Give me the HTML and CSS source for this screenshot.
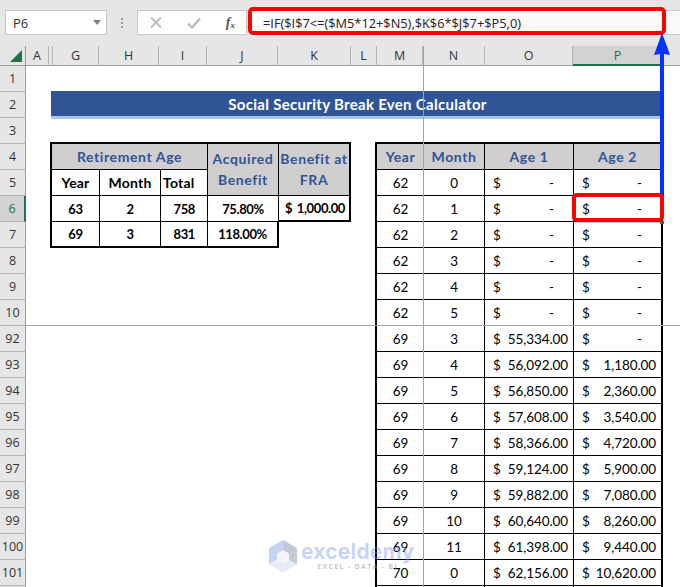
FILE: index.html
```html
<!DOCTYPE html>
<html lang="en">
<head>
<meta charset="utf-8">
<title>Social Security Break Even Calculator</title>
<link rel="stylesheet" href="styles.css">
</head>
<body>
<div class="app">
  <div class="toolbar">
    <div class="namebox"><span>P6</span><svg class="caret" width="8" height="5" viewBox="0 0 8 5"><path d="M0 0h8L4 5z" fill="#7f7f7f"/></svg></div>
    <div class="dots"><i></i><i></i><i></i></div>
    <div class="fxbtns">
      <svg width="12" height="11" viewBox="0 0 12 11"><path d="M1 .5l10 10M11 .5l-10 10" stroke="#bdbdbd" stroke-width="2" fill="none"/></svg>
      <svg width="14" height="12" viewBox="0 0 14 12"><path d="M1 6.500l4 4L13 1.500" stroke="#bdbdbd" stroke-width="2.400" fill="none"/></svg>
      <span class="fx">f<sub>x</sub></span>
    </div>
    <div class="formula">=IF($I$7&lt;=($M5*12+$N5),$K$6*$J$7+$P5,0)</div>
  </div>
  <div class="colhead">
    <div class="corner"><svg width="12" height="12" viewBox="0 0 12 12"><path d="M12 0v12H0z" fill="#217346"/></svg></div>
    <div class="ch">A</div><div class="ch"></div><div class="ch">G</div><div class="ch">H</div><div class="ch">I</div><div class="ch">J</div><div class="ch">K</div><div class="ch">L</div><div class="ch">M</div><div class="ch">N</div><div class="ch">O</div><div class="ch active">P</div><div class="ch last"></div>
  </div>
  <div class="sheet">
    <div class="rowhead">
      <div class="rh">1</div><div class="rh">2</div><div class="rh">3</div><div class="rh">4</div><div class="rh">5</div>
      <div class="rh act">6</div><div class="rh">7</div><div class="rh">8</div><div class="rh">9</div><div class="rh">10</div>
      <div class="rh">92</div><div class="rh">93</div><div class="rh">94</div><div class="rh">95</div><div class="rh">96</div>
      <div class="rh">97</div><div class="rh">98</div><div class="rh">99</div><div class="rh">100</div><div class="rh">101</div>
      <div class="rh"></div>
    </div>
    <div class="cells">
      <div class="banner">Social Security Break Even Calculator</div>
      <div class="tables">
        <div class="retire">
          <div class="c hd span3 rb bb">Retirement Age</div>
          <div class="c hd tall rb"><span>Acquired</span><span>Benefit</span></div>
          <div class="c hd tall fra"><span>Benefit at</span><span>FRA</span></div>
          <div class="c bold rb bb">Year</div><div class="c bold rb bb">Month</div><div class="c bold rb bb total">Total</div>
          <div class="c numb rb bb">63</div><div class="c numb rb bb">2</div><div class="c numb rb bb num">758</div><div class="c numb rb bb">75.80%</div><div class="c numb money"><span>$</span><span>1,000.00</span></div>
          <div class="c numb rb last-row">69</div><div class="c numb rb last-row">3</div><div class="c numb rb num last-row">831</div><div class="c numb edge last-row">118.00%</div>
        </div>
        <div class="months">
          <div class="c hd rule">Year</div><div class="c hd rb rule">Month</div><div class="c hd rb rule">Age 1</div><div class="c hd rule">Age 2</div>

          <div class="c rule">62</div><div class="c rb rule">0</div><div class="c acc rb rule"><span>$</span><span class="dash">-</span></div><div class="c acc rule"><span>$</span><span class="dash">-</span></div>
          <div class="c rule">62</div><div class="c rb rule">1</div><div class="c acc rb rule"><span>$</span><span class="dash">-</span></div><div class="c acc rule"><span>$</span><span class="dash">-</span></div>
          <div class="c rule">62</div><div class="c rb rule">2</div><div class="c acc rb rule"><span>$</span><span class="dash">-</span></div><div class="c acc rule"><span>$</span><span class="dash">-</span></div>
          <div class="c rule">62</div><div class="c rb rule">3</div><div class="c acc rb rule"><span>$</span><span class="dash">-</span></div><div class="c acc rule"><span>$</span><span class="dash">-</span></div>
          <div class="c rule">62</div><div class="c rb rule">4</div><div class="c acc rb rule"><span>$</span><span class="dash">-</span></div><div class="c acc rule"><span>$</span><span class="dash">-</span></div>
          <div class="c">62</div><div class="c rb">5</div><div class="c acc rb"><span>$</span><span class="dash">-</span></div><div class="c acc"><span>$</span><span class="dash">-</span></div>

          <div class="c rule">69</div><div class="c rb rule">3</div><div class="c acc rb rule"><span>$</span><span>55,334.00</span></div><div class="c acc rule"><span>$</span><span class="dash">-</span></div>
          <div class="c rule">69</div><div class="c rb rule">4</div><div class="c acc rb rule"><span>$</span><span>56,092.00</span></div><div class="c acc rule"><span>$</span><span>1,180.00</span></div>
          <div class="c rule">69</div><div class="c rb rule">5</div><div class="c acc rb rule"><span>$</span><span>56,850.00</span></div><div class="c acc rule"><span>$</span><span>2,360.00</span></div>
          <div class="c rule">69</div><div class="c rb rule">6</div><div class="c acc rb rule"><span>$</span><span>57,608.00</span></div><div class="c acc rule"><span>$</span><span>3,540.00</span></div>
          <div class="c rule">69</div><div class="c rb rule">7</div><div class="c acc rb rule"><span>$</span><span>58,366.00</span></div><div class="c acc rule"><span>$</span><span>4,720.00</span></div>
          <div class="c rule">69</div><div class="c rb rule">8</div><div class="c acc rb rule"><span>$</span><span>59,124.00</span></div><div class="c acc rule"><span>$</span><span>5,900.00</span></div>
          <div class="c rule">69</div><div class="c rb rule">9</div><div class="c acc rb rule"><span>$</span><span>59,882.00</span></div><div class="c acc rule"><span>$</span><span>7,080.00</span></div>
          <div class="c rule">69</div><div class="c rb rule">10</div><div class="c acc rb rule"><span>$</span><span>60,640.00</span></div><div class="c acc rule"><span>$</span><span>8,260.00</span></div>
          <div class="c rule">69</div><div class="c rb rule">11</div><div class="c acc rb rule"><span>$</span><span>61,398.00</span></div><div class="c acc rule"><span>$</span><span>9,440.00</span></div>
          <div class="c rule">70</div><div class="c rb rule">0</div><div class="c acc rb rule"><span>$</span><span>62,156.00</span></div><div class="c acc rule"><span>$</span><span>10,620.00</span></div>
          <div class="c"></div><div class="c rb"></div><div class="c rb"></div><div class="c"></div>
        </div>
      </div>
    </div>
  </div>

  <div class="freeze-v"></div>
  <div class="freeze-h"></div>
  <div class="redbox formula-mark"></div>
  <svg class="arrow" width="18" height="164" viewBox="0 0 18 164"><path d="M9 0l8 22-6-1v143H7V21l-6 1z" fill="#0033ff"/></svg>
  <div class="redbox cell-mark"></div>
  <div class="handle"></div>
  <div class="watermark">
    <svg width="30" height="32" viewBox="0 0 30 32"><path d="M15 0l14 8v16l-14 8-14-8V8z" fill="#c6d4f4"/><path d="M15 32L1 24l14-8 14 8z" fill="#e6ebf4"/><path d="M15 0l14 8v16l-14-8z" fill="#c3c9d6"/><path d="M15 10l6 3.500v7L15 24l-6-3.500v-7z" fill="#f4f6fb"/></svg>
    <div class="wm-text"><span class="wm-main">exceldemy</span><span class="wm-sub">EXCEL - DATA - BI</span></div>
  </div>
</div>
</body>
</html>
```
FILE: styles.css
```css
* { box-sizing: border-box; }
html, body { margin: 0; height: 100%; }
body { overflow: hidden; background: #fff; }
.app { position: relative; width: 680px; height: 587px; overflow: hidden; font-family: "Lato", sans-serif; color: #000; }

.toolbar { height: 46px; background: #e6e6e6; display: flex; align-items: flex-start; padding: 10px 0 0 5px; font-family: "Open Sans", sans-serif; }
.namebox { width: 102px; height: 25px; background: #fff; border: 1px solid #c8c8c8; display: flex; align-items: center; justify-content: space-between; padding: 0 5px 0 7px; font-size: 13px; color: #333; }
.dots { width: 30px; height: 25px; display: flex; flex-direction: column; align-items: center; justify-content: center; gap: 2px; }
.dots i { width: 2px; height: 2px; background: #9a9a9a; }
.fxbtns { width: 110px; height: 25px; background: #fff; border: 1px solid #c8c8c8; display: flex; align-items: center; justify-content: space-between; padding: 0 11px 0 12px; }
.fx { font-family: "Liberation Serif", serif; font-style: italic; font-weight: bold; font-size: 14px; color: #555; line-height: 1; }
.fx sub { font-size: 9px; vertical-align: -1px; line-height: 0; }
.formula { flex: 1; height: 25px; margin-left: 4px; background: #fafafa; border: 1px solid #c8c8c8; border-right: 0; font-size: 12.800px; line-height: 24px; padding-left: 11px; color: #222; white-space: nowrap; }

.colhead { height: 20px; display: grid; grid-template-columns: 26px 23px 4px 46px 60px 48px 71px 73px 26px 46px 62px 88px 89px 18px; background: #e6e6e6; border-bottom: 1px solid #9e9e9e; font-family: "Open Sans", sans-serif; }
.corner { display: flex; justify-content: flex-end; padding: 4px 3px 0 0; border-right: 1px solid #9e9e9e; }
.ch { font-size: 12.500px; line-height: 20px; text-align: center; color: #333; border-right: 1px solid #b4b4b4; }
.ch.active { background: #d2d2d2; color: #217346; height: 20px; border-bottom: 2px solid #217346; border-right: 0; }
.ch.last { border-right: 0; }

.sheet { display: flex; height: 521px; font-size: 13.500px; }
.rowhead { width: 26px; flex: none; display: flex; flex-direction: column; }
.rh { height: 26px; flex: none; background: #e6e6e6; border-right: 1px solid #9e9e9e; border-bottom: 1px solid #b4b4b4; font-family: "Open Sans", sans-serif; font-size: 12.500px; line-height: 26px; text-align: center; color: #333; }
.rh.act { background: #d2d2d2; color: #217346; border-right: 2px solid #217346; }

.cells { flex: 1; display: flex; flex-direction: column; padding-top: 25px; }
.banner { width: 609px; height: 28px; margin-left: 25px; padding-left: 4px; background: #305496; color: #fff; font-weight: 700; font-size: 15px; text-align: center; line-height: 26px; border-bottom: 3px solid #a9c6e6; letter-spacing: 0.3px; }
.tables { display: flex; align-items: flex-start; margin-top: 23px; padding-left: 24px; }

.retire { width: 301px; display: grid; grid-template-columns: 48px 61px 47px 71px 72px; grid-template-rows: 26px 26px 26px 26px; border: solid #000; border-width: 2px 0 0 2px; }
.months { width: 288px; margin-left: 24px; display: grid; grid-template-columns: 47px 61px 89px 87px; grid-auto-rows: 26px; border: solid #000; border-width: 2px 2px 0 2px; }

.c { display: flex; align-items: center; justify-content: center; white-space: nowrap; letter-spacing: -0.1px; }
.hd { background: #d0cece; color: #305496; font-weight: 700; font-size: 14px; letter-spacing: 0.6px; }
.span3 { grid-column: span 3; }
.tall { grid-row: span 2; flex-direction: column; gap: 3px; line-height: 18px; border-bottom: 1px solid #000; }
.fra { border-right: 2px solid #000; }
.bold { font-weight: 700; font-size: 14px; letter-spacing: 0.2px; }
.numb { font-weight: 700; font-size: 13px; letter-spacing: -0.4px; }
.rb { border-right: 1px solid #000; }
.bb, .rule { border-bottom: 1px solid #000; }
.last-row { border-bottom: 2px solid #000; }
.edge { border-right: 2px solid #000; }
.total { justify-content: flex-start; padding-left: 2px; }
.num { justify-content: flex-end; padding-right: 12px; }
.money { justify-content: space-between; padding: 0 4px 0 6px; border: solid #000; border-width: 0 2px 2px 0; }
.acc { justify-content: space-between; padding: 0 5px 0 8px; }
.dash { padding-right: 14px; }

.freeze-v { position: absolute; left: 423px; top: 46px; bottom: 0; width: 1px; background: #a3a3a3; }
.freeze-h { position: absolute; left: 25px; right: 0; top: 325px; height: 1px; background: #a3a3a3; }
.redbox { position: absolute; border: 4px solid #fd0000; border-radius: 5px; }
.formula-mark { left: 248px; top: 7px; width: 418px; height: 28px; }
.cell-mark { left: 572px; top: 193px; width: 92px; height: 29px; box-shadow: 0 1px 1px rgba(0, 0, 0, 0.25); }
.handle { position: absolute; left: 660px; top: 221px; width: 4px; height: 3px; background: #217346; }
.arrow { position: absolute; left: 653px; top: 33px; }

.watermark { position: absolute; left: 268px; top: 540px; display: flex; gap: 3px; }
.wm-text { display: flex; flex-direction: column; align-items: center; }
.wm-main { font-family: "Inter", sans-serif; font-weight: 700; font-size: 21px; line-height: 23px; letter-spacing: 0.2px; color: rgba(120, 150, 235, 0.42); }
.wm-sub { font-family: "Open Sans", sans-serif; font-weight: 700; font-size: 7px; line-height: 8px; letter-spacing: 1.300px; color: rgba(150, 150, 150, 0.55); }
```
